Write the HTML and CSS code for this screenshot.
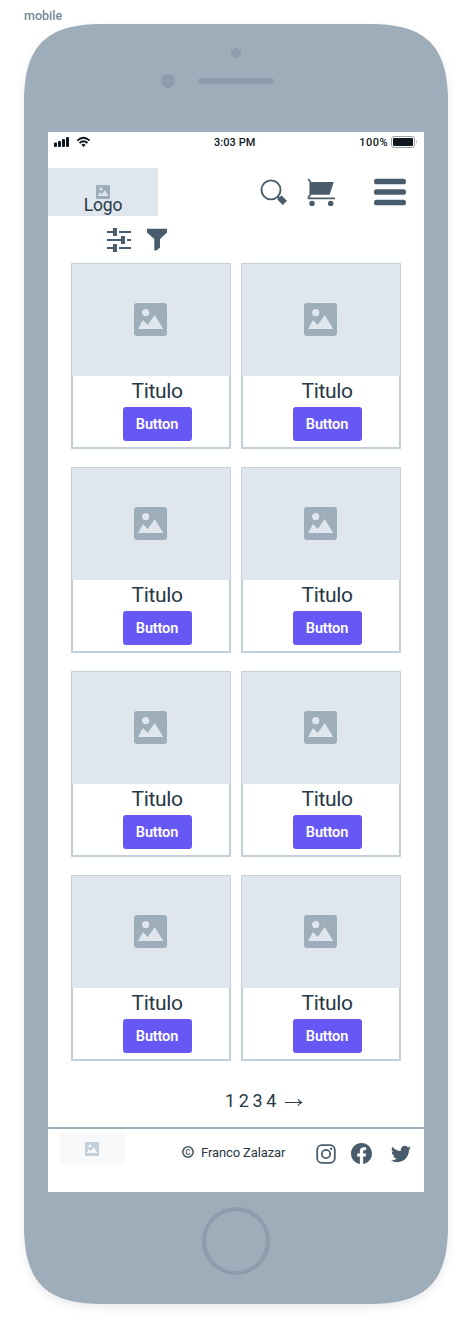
FILE: index.html
```
<!DOCTYPE html>
<html lang="es">
<head>
<meta charset="utf-8">
<title>mobile</title>
<link rel="stylesheet" href="styles.css">
</head>
<body>
<svg class="symbols" width="0" height="0" aria-hidden="true">
  <symbol id="picture" viewBox="0 0 33 33"><path fill-rule="evenodd" d="M3 0H30Q33 0 33 3V30Q33 33 30 33H3Q0 33 0 30V3Q0 0 3 0ZM11.700 6A3.600 3.600 0 1 0 11.700 13.200A3.600 3.600 0 1 0 11.700 6ZM4 26H29.300L20.700 12L13.700 22L9 17Z"/></symbol>
</svg>
<div class="label">mobile</div>
<div class="phone">
  <svg class="shell" viewBox="0 0 424 1280"><path d="M0 78C0 22 22 0 78 0H346C402 0 424 22 424 78V1202C424 1258 402 1280 346 1280H78C22 1280 0 1258 0 1202Z"/></svg>
  <svg class="hardware top" viewBox="0 0 424 108"><circle cx="212" cy="29" r="5"/><circle cx="144" cy="57" r="7"/><rect x="174" y="54" width="76" height="6" rx="3"/></svg>
  <div class="screen">
    <div class="status">
      <svg class="signal" width="36" height="12" viewBox="0 0 36 12">
        <rect x="0" y="6.500" width="3" height="4.500" rx="1"/><rect x="4" y="5" width="3" height="6" rx="1"/><rect x="8" y="3" width="3" height="8" rx="1"/><rect x="12" y="1" width="3" height="10" rx="1"/>
        <g fill="none" stroke="#10181f" stroke-width="1.800"><path d="M23.300 4.600Q29.500-1 35.700 4.600M25.500 7Q29.500 3.400 33.500 7"/></g><path d="M27.400 8.700Q29.500 7 31.600 8.700L29.500 10.900Z"/>
      </svg>
      <span class="time">3:03 PM</span>
      <span class="percent">100%</span>
      <svg class="battery" width="27" height="12" viewBox="0 0 27 12"><rect x=".5" y=".5" width="23" height="11" rx="2.500" fill="none" stroke="#9a9fa3"/><rect x="2" y="2" width="20" height="8" rx="1"/><path d="M25 4Q26.500 6 25 8Z" fill="#9a9fa3"/></svg>
    </div>
    <header class="header">
      <div class="logo"><svg width="14" height="14"><use href="#picture"/></svg><span>Logo</span></div>
      <nav class="actions">
        <svg width="28" height="28" viewBox="0 0 28 28"><circle cx="11" cy="11.900" r="9.500" fill="none" stroke="#495c6b" stroke-width="1.900"/><path d="M17.500 18.500L20 21" stroke="#495c6b" stroke-width="2.200"/><path d="M17.700 21.500L21.500 17.700L26.600 22.800L22.800 26.800Z" stroke="#495c6b" stroke-width=".6" stroke-linejoin="round"/></svg>
        <svg class="cart" width="29" height="28" viewBox="0 0 29 28"><path d="M3 4H26.800L22.600 16.700H3Z"/><path d="M1 1.200L3.300 3.500V16.700L1.500 19V20.300H28" fill="none" stroke="#495c6b" stroke-width="1.700" stroke-linejoin="round"/><circle cx="5" cy="25.500" r="2.800"/><circle cx="23.700" cy="25.500" r="2.800"/></svg>
        <svg class="menu" width="32" height="28" viewBox="0 0 32 28"><rect y=".7" width="32" height="5.600" rx="2.600"/><rect y="11.200" width="32" height="5.600" rx="2.600"/><rect y="21.700" width="32" height="5.600" rx="2.600"/></svg>
      </nav>
    </header>
    <div class="filters">
      <svg width="24" height="24" viewBox="0 0 24 24"><path d="M0 3H6V0H10V8H6V5H0ZM12 3H24V5H12ZM0 11H14V8H18V16H14V13H0ZM20 11H24V13H20ZM0 19H6V16H10V24H6V21H0ZM12 19H24V21H12Z"/></svg>
      <svg width="20" height="23" viewBox="0 0 20 23"><path d="M0 .8H20V4.500L13 11V19.500L9.400 22.500H7.300V11L0 4.500Z"/></svg>
    </div>
    <main class="grid">
      <article class="card"><div class="photo"><svg><use href="#picture"/></svg></div><div class="body"><h2>Titulo</h2><button>Button</button></div></article>
      <article class="card"><div class="photo"><svg><use href="#picture"/></svg></div><div class="body"><h2>Titulo</h2><button>Button</button></div></article>
      <article class="card"><div class="photo"><svg><use href="#picture"/></svg></div><div class="body"><h2>Titulo</h2><button>Button</button></div></article>
      <article class="card"><div class="photo"><svg><use href="#picture"/></svg></div><div class="body"><h2>Titulo</h2><button>Button</button></div></article>
      <article class="card"><div class="photo"><svg><use href="#picture"/></svg></div><div class="body"><h2>Titulo</h2><button>Button</button></div></article>
      <article class="card"><div class="photo"><svg><use href="#picture"/></svg></div><div class="body"><h2>Titulo</h2><button>Button</button></div></article>
      <article class="card"><div class="photo"><svg><use href="#picture"/></svg></div><div class="body"><h2>Titulo</h2><button>Button</button></div></article>
      <article class="card"><div class="photo"><svg><use href="#picture"/></svg></div><div class="body"><h2>Titulo</h2><button>Button</button></div></article>
    </main>
    <div class="pages"><span>1 2 3 4</span><svg width="18" height="8" viewBox="0 0 18 8"><path d="M0 4.500H16M13 1.300Q14.500 4 17 4.500Q14.500 5 13 7.700" fill="none" stroke="#293845" stroke-width="1.100"/></svg></div>
    <footer class="footer">
      <div class="footer-logo"><svg width="14" height="14"><use href="#picture"/></svg></div>
      <div class="credit">
        <svg class="copyright" width="12" height="12" viewBox="0 0 12 12"><circle cx="6" cy="6" r="5.200" stroke-width="1.600"/><path d="M7.800 4.700C7 2.800 4.200 3.200 4.200 6S7 9.200 7.800 7.300" stroke-width="1.100"/></svg>
        <span>Franco Zalazar</span>
      </div>
      <div class="social">
        <svg width="20" height="20" viewBox="0 0 20 20"><g fill="none" stroke="#495c6b" stroke-width="1.800"><rect x="1.200" y="1.200" width="17.600" height="17.600" rx="4.500"/><circle cx="10" cy="10" r="4.200"/></g><circle cx="15.200" cy="4.800" r="1.200"/></svg>
        <svg class="facebook" width="21" height="21" viewBox="0 0 24 24"><path d="M24 12.070C24 5.400 18.630 0 12 0S0 5.400 0 12.070C0 18.100 4.390 23.100 10.130 24V15.560H7.080V12.070H10.130V9.410C10.130 6.390 11.920 4.720 14.660 4.720C15.970 4.720 17.340 4.950 17.340 4.950V7.920H15.830C14.340 7.920 13.870 8.850 13.870 9.810V12.070H17.200L16.670 15.560H13.870V24C19.610 23.100 24 18.100 24 12.070Z"/></svg>
        <svg class="twitter" width="20" height="20" viewBox="0 0 24 24"><path d="M23.950 4.570a10 10 0 0 1-2.820.77 4.960 4.960 0 0 0 2.160-2.720c-.95.560-2 .960-3.130 1.190a4.920 4.920 0 0 0-8.380 4.480C7.690 8.090 4.070 6.130 1.640 3.160a4.920 4.920 0 0 0 1.520 6.570 4.900 4.900 0 0 1-2.230-.61v.06a4.920 4.920 0 0 0 3.950 4.830 5 5 0 0 1-2.210.08 4.940 4.940 0 0 0 4.600 3.420A9.870 9.870 0 0 1 0 19.540a13.990 13.990 0 0 0 7.550 2.210c9.050 0 14-7.500 14-13.980 0-.21 0-.42-.02-.63a9.940 9.940 0 0 0 2.420-2.570Z"/></svg>
      </div>
    </footer>
  </div>
  <svg class="hardware home" viewBox="0 0 68 68"><circle cx="34" cy="34" r="32" fill="none" stroke="#8e9dab" stroke-width="4"/></svg>
</div>
</body>
</html>
```
FILE: styles.css
```
* { box-sizing: border-box; }
body { margin: 0; height: 1328px; padding: 0 24px; background: #fff; font-family: Roboto, "Liberation Sans", sans-serif; color: #293845; overflow: hidden; }
svg { display: block; fill: #495c6b; flex: none; }
.symbols { position: absolute; }
.label { height: 24px; padding-top: 8px; font-size: 12.5px; line-height: 16px; font-weight: 500; color: #788896; }
.phone { position: relative; width: 424px; height: 1280px; display: flex; flex-direction: column; align-items: center; }
.shell { position: absolute; left: 0; top: 0; width: 424px; height: 1280px; fill: #9eadba; overflow: visible; filter: drop-shadow(0 4px 5px rgba(0,0,0,.08)); }
.hardware { position: relative; fill: #8e9dab; }
.top { width: 424px; height: 108px; }
.home { width: 68px; height: 68px; margin-top: 15px; }
.screen { position: relative; width: 376px; height: 1060px; background: #fff; display: flex; flex-direction: column; }
.status { height: 36px; padding: 4px 6px 0; display: grid; grid-template-columns: 160px 1fr auto 27px; align-items: start; font-size: 11px; line-height: 13px; font-weight: 500; color: #10181f; }
.status svg { fill: #10181f; }
.time { letter-spacing: .05px; white-space: nowrap; }
.percent { margin-right: 3px; letter-spacing: .5px; }
.header { height: 48px; display: flex; justify-content: space-between; }
.logo { width: 110px; height: 48px; padding-top: 17px; background: #dfe6ee; display: flex; flex-direction: column; align-items: center; font-size: 17.5px; line-height: 18px; letter-spacing: -.2px; }
.logo svg { fill: #9eadba; }
.logo span { margin-top: -3px; }
.actions { display: flex; padding: 10px 18px 0 0; }
.cart { margin-left: 19px; }
.menu { margin-left: 38px; }
.filters { height: 47px; padding: 12px 0 0 59px; display: flex; gap: 16px; }
.grid { padding-left: 23px; display: grid; grid-template-columns: 160px 160px; grid-auto-rows: 186px; gap: 18px 10px; }
.card { border: 1px solid #c3cfd9; display: flex; flex-direction: column; }
.photo { height: 112px; padding: 39px 0 0 62px; background: #dfe6ee; }
.photo svg { width: 33px; height: 33px; fill: #9eadba; }
.body { flex: 1; border: 1px solid #c3cfd9; border-top: 0; padding: 1px 0 0 12px; display: flex; flex-direction: column; align-items: center; }
h2 { margin: 0; font-size: 21px; line-height: 28px; height: 30px; font-weight: 400; letter-spacing: -.35px; }
button { width: 69px; height: 34px; padding: 1px 0 0; border: 0; border-radius: 3px; background: #6558f5; color: #fff; font: 600 14.500px/33px Roboto, sans-serif; letter-spacing: -.15px; }
.pages { height: 66px; padding: 28px 0 0 177px; display: flex; gap: 9px; font-size: 18px; line-height: 24px; letter-spacing: -.4px; }
.pages svg { margin-top: 9px; }
.footer { border-top: 2px solid #9eadba; padding: 4px 0 0 12px; height: 65px; display: flex; align-items: flex-start; }
.footer-logo { width: 65px; height: 32px; padding: 9px 0 0 25px; background: #f7f9fb; }
.footer-logo svg { fill: #c3cfd9; }
.credit { margin-left: 57px; padding-top: 11px; width: 134px; height: 27px; display: flex; align-items: center; gap: 7px; font-size: 13px; line-height: 16px; letter-spacing: -.12px; white-space: nowrap; }
.copyright { fill: none; stroke: #495c6b; }
.credit span { padding-top: 1px; }
.social { display: flex; padding-top: 11px; }
.facebook { margin-left: 15px; margin-top: -1px; }
.twitter { margin-left: 19px; }
```
